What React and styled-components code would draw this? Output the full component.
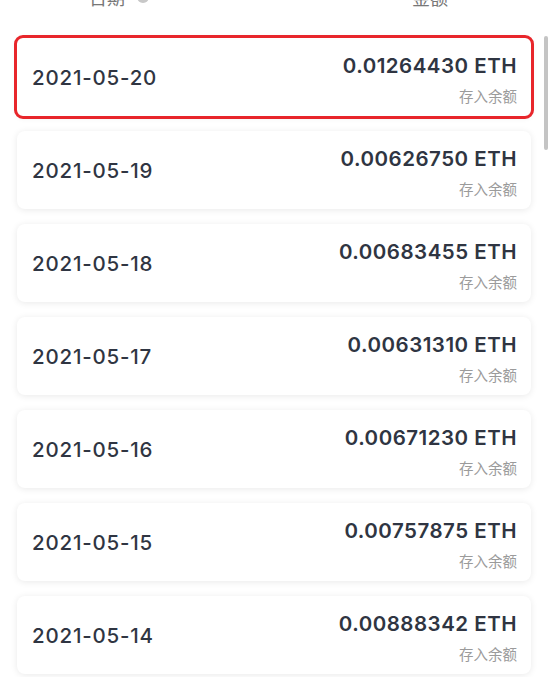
import styled, { createGlobalStyle } from "styled-components";

const GlobalStyle = createGlobalStyle`
  html, body {
    margin: 0;
    padding: 0;
    background: #ffffff;
    overflow: hidden;
  }
  body {
    font-family: Inter, "Noto Sans CJK SC", sans-serif;
  }
`;

const Page = styled.div`
  width: 548px;
  height: 677px;
  overflow: hidden;
  position: relative;
  background: #fff;
`;

const Header = styled.div`
  display: flex;
  align-items: center;
  height: 18px;
  margin-top: -12px;
  padding-left: 89px;
  color: #777;
  font-family: "Noto Sans CJK SC", sans-serif;
  font-size: 18px;
  line-height: 18px;
`;

const HeaderCell = styled.div`
  display: flex;
  align-items: center;
  gap: 12px;
  width: ${props => props.width}px;
`;

const InfoDot = styled.span`
  display: inline-block;
  width: 12px;
  height: 12px;
  border-radius: 50%;
  background: #c8c8c8;
`;

const List = styled.div`
  display: flex;
  flex-direction: column;
  gap: 15px;
  padding: 32px 17px 0 17px;
`;

const Card = styled.div`
  display: flex;
  align-items: center;
  justify-content: space-between;
  height: 78px;
  box-sizing: border-box;
  padding: 0 14px 0 15px;
  background: #fff;
  border-radius: 8px;
  box-shadow: 0 1px 7px rgba(0, 0, 0, 0.09);
  ${props => props.active && `
    outline: 3px solid #e8262b;
    outline-offset: 0px;
    border-radius: 6px;
  `}
`;

const DateText = styled.div`
  color: #2f3542;
  font-size: 20.5px;
  font-weight: 500;
  letter-spacing: 0.8px;
  margin-top: 1px;
`;

const AmountCol = styled.div`
  display: flex;
  flex-direction: column;
  align-items: flex-end;
  gap: 11px;
  margin-top: 4px;
`;

const Amount = styled.div`
  color: #2f3542;
  font-size: 20.5px;
  font-weight: 600;
  letter-spacing: 0.5px;
  line-height: 22px;
`;

const Label = styled.div`
  color: #9b9b9b;
  font-family: "Noto Sans CJK SC", sans-serif;
  font-size: 14.5px;
  line-height: 16px;
`;

const Scrollbar = styled.div`
  position: absolute;
  right: 0;
  top: 36px;
  width: 4px;
  height: 114px;
  border-radius: 2px;
  background: #c4c4c4;
`;

const rows = [
  { date: "2021-05-20", amount: "0.01264430" },
  { date: "2021-05-19", amount: "0.00626750" },
  { date: "2021-05-18", amount: "0.00683455" },
  { date: "2021-05-17", amount: "0.00631310" },
  { date: "2021-05-16", amount: "0.00671230" },
  { date: "2021-05-15", amount: "0.00757875" },
  { date: "2021-05-14", amount: "0.00888342" },
];

export default function App() {
  return (
    <Page>
      <GlobalStyle />
      <Header>
        <HeaderCell width={323}>
          日期 <InfoDot />
        </HeaderCell>
        <HeaderCell>金额</HeaderCell>
      </Header>
      <List>
        {rows.map((row, i) => (
          <Card key={row.date} active={i === 0}>
            <DateText>{row.date}</DateText>
            <AmountCol>
              <Amount>{row.amount} ETH</Amount>
              <Label>存入余额</Label>
            </AmountCol>
          </Card>
        ))}
      </List>
      <Scrollbar />
    </Page>
  );
}
